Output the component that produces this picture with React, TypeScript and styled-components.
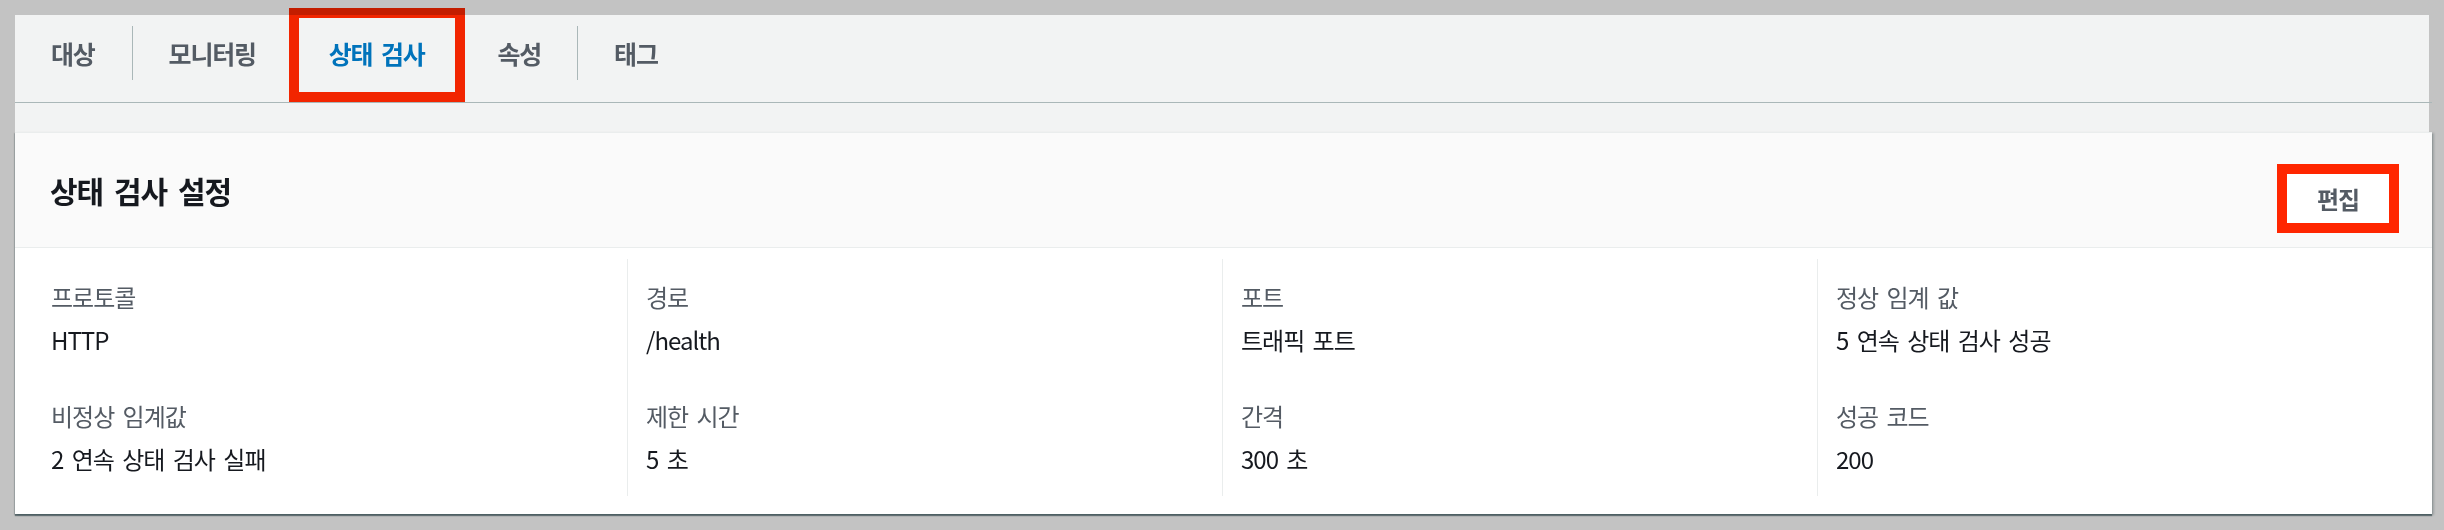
import React from "react";
import styled, { createGlobalStyle, css } from "styled-components";

const Global = createGlobalStyle`
  html, body {
    margin: 0;
    padding: 0;
    background: #c3c3c3;
    font-family: "Noto Sans CJK KR", "Noto Sans", sans-serif;
  }
  * { box-sizing: border-box; }
`;

const Frame = styled.div`
  width: 2444px;
  height: 530px;
  padding: 15px 15px 15px 15px;
  overflow: hidden;
`;

const Panel = styled.div`
  background: #f2f3f3;
`;

const TabBar = styled.nav`
  display: flex;
  align-items: flex-start;
  height: 88px;
  padding-top: 11px;
  border-bottom: 1px solid #aab7b8;
  margin-right: -3px;
`;

const Tab = styled.div<{ $sep?: boolean; $active?: boolean; $first?: boolean }>`
  position: relative;
  height: 54px;
  display: flex;
  align-items: center;
  padding: 0 36px;
  ${(p) =>
    p.$first &&
    css`
      padding-left: 35px;
      padding-right: 37px;
    `}
  border-left: 1px solid ${(p) => (p.$sep ? "#aab7b8" : "transparent")};
  font-size: 25px;
  font-weight: 700;
  letter-spacing: -1.2px;
  word-spacing: 4px;
  color: ${(p) => (p.$active ? "#0073bb" : "#545b64")};
  white-space: nowrap;
  ${(p) =>
    p.$active &&
    css`
      &::after {
        content: "";
        position: absolute;
        top: -18px;
        bottom: -22px;
        left: -4px;
        right: -4px;
        border: 10px solid #ff2600;
        mix-blend-mode: multiply;
        pointer-events: none;
      }
    `}
`;

const Gap = styled.div`
  height: 29px;
`;

const Card = styled.section`
  background: #ffffff;
  margin-right: -3px;
  box-shadow: 0 2px 1px 0 rgba(0, 28, 36, 0.45), 2px 1px 2px 0 rgba(0, 28, 36, 0.2),
    -1px 1px 1px 0 rgba(0, 28, 36, 0.15);
  border-top: 1px solid #eaeded;
`;

const CardHeader = styled.header`
  height: 115px;
  display: flex;
  align-items: center;
  justify-content: space-between;
  padding: 0 33px 0 35px;
  background: #fafafa;
  border-bottom: 1px solid #eaeded;
`;

const Title = styled.h2`
  margin: 0;
  font-size: 30px;
  font-weight: 700;
  letter-spacing: -1px;
  word-spacing: 5px;
  color: #16191f;
  line-height: 40px;
`;

const EditButton = styled.button`
  margin-top: 16px;
  width: 122px;
  height: 69px;
  padding: 0;
  display: flex;
  align-items: center;
  justify-content: center;
  border: 10px solid #ff2600;
  background: #ffffff;
  font-family: inherit;
  font-size: 24px;
  font-weight: 700;
  letter-spacing: -1px;
  color: #545b64;
  cursor: pointer;
`;

const Body = styled.div`
  display: grid;
  grid-template-columns: repeat(4, 595px);
  padding: 11px 20px 18px 17px;
`;

const Column = styled.div<{ $first?: boolean }>`
  display: flex;
  flex-direction: column;
  gap: 42px;
  padding: 21px 18px 20px 18px;
  border-left: 1px solid ${(p) => (p.$first ? "transparent" : "#eaeded")};
`;

const Field = styled.div`
  display: flex;
  flex-direction: column;
  gap: 9px;
`;

const Label = styled.div`
  font-size: 24px;
  line-height: 34px;
  letter-spacing: -1px;
  word-spacing: 4px;
  color: #545b64;
`;

const Value = styled.div`
  font-size: 24px;
  line-height: 34px;
  letter-spacing: -1px;
  word-spacing: 4px;
  color: #16191f;
`;

const tabs = [
  { label: "대상", sep: false },
  { label: "모니터링", sep: true },
  { label: "상태 검사", sep: false, active: true },
  { label: "속성", sep: false },
  { label: "태그", sep: true },
];

const columns = [
  [
    ["프로토콜", "HTTP"],
    ["비정상 임계값", "2 연속 상태 검사 실패"],
  ],
  [
    ["경로", "/health"],
    ["제한 시간", "5 초"],
  ],
  [
    ["포트", "트래픽 포트"],
    ["간격", "300 초"],
  ],
  [
    ["정상 임계 값", "5 연속 상태 검사 성공"],
    ["성공 코드", "200"],
  ],
];

export default function App() {
  return (
    <>
      <Global />
      <Frame>
        <Panel>
          <TabBar>
            {tabs.map((t, i) => (
              <Tab key={t.label} $sep={t.sep} $active={t.active} $first={i === 0}>
                {t.label}
              </Tab>
            ))}
          </TabBar>
          <Gap />
          <Card>
            <CardHeader>
              <Title>상태 검사 설정</Title>
              <EditButton>편집</EditButton>
            </CardHeader>
            <Body>
              {columns.map((col, ci) => (
                <Column key={ci} $first={ci === 0}>
                  {col.map(([l, v]) => (
                    <Field key={l}>
                      <Label>{l}</Label>
                      <Value>{v}</Value>
                    </Field>
                  ))}
                </Column>
              ))}
            </Body>
          </Card>
        </Panel>
      </Frame>
    </>
  );
}
